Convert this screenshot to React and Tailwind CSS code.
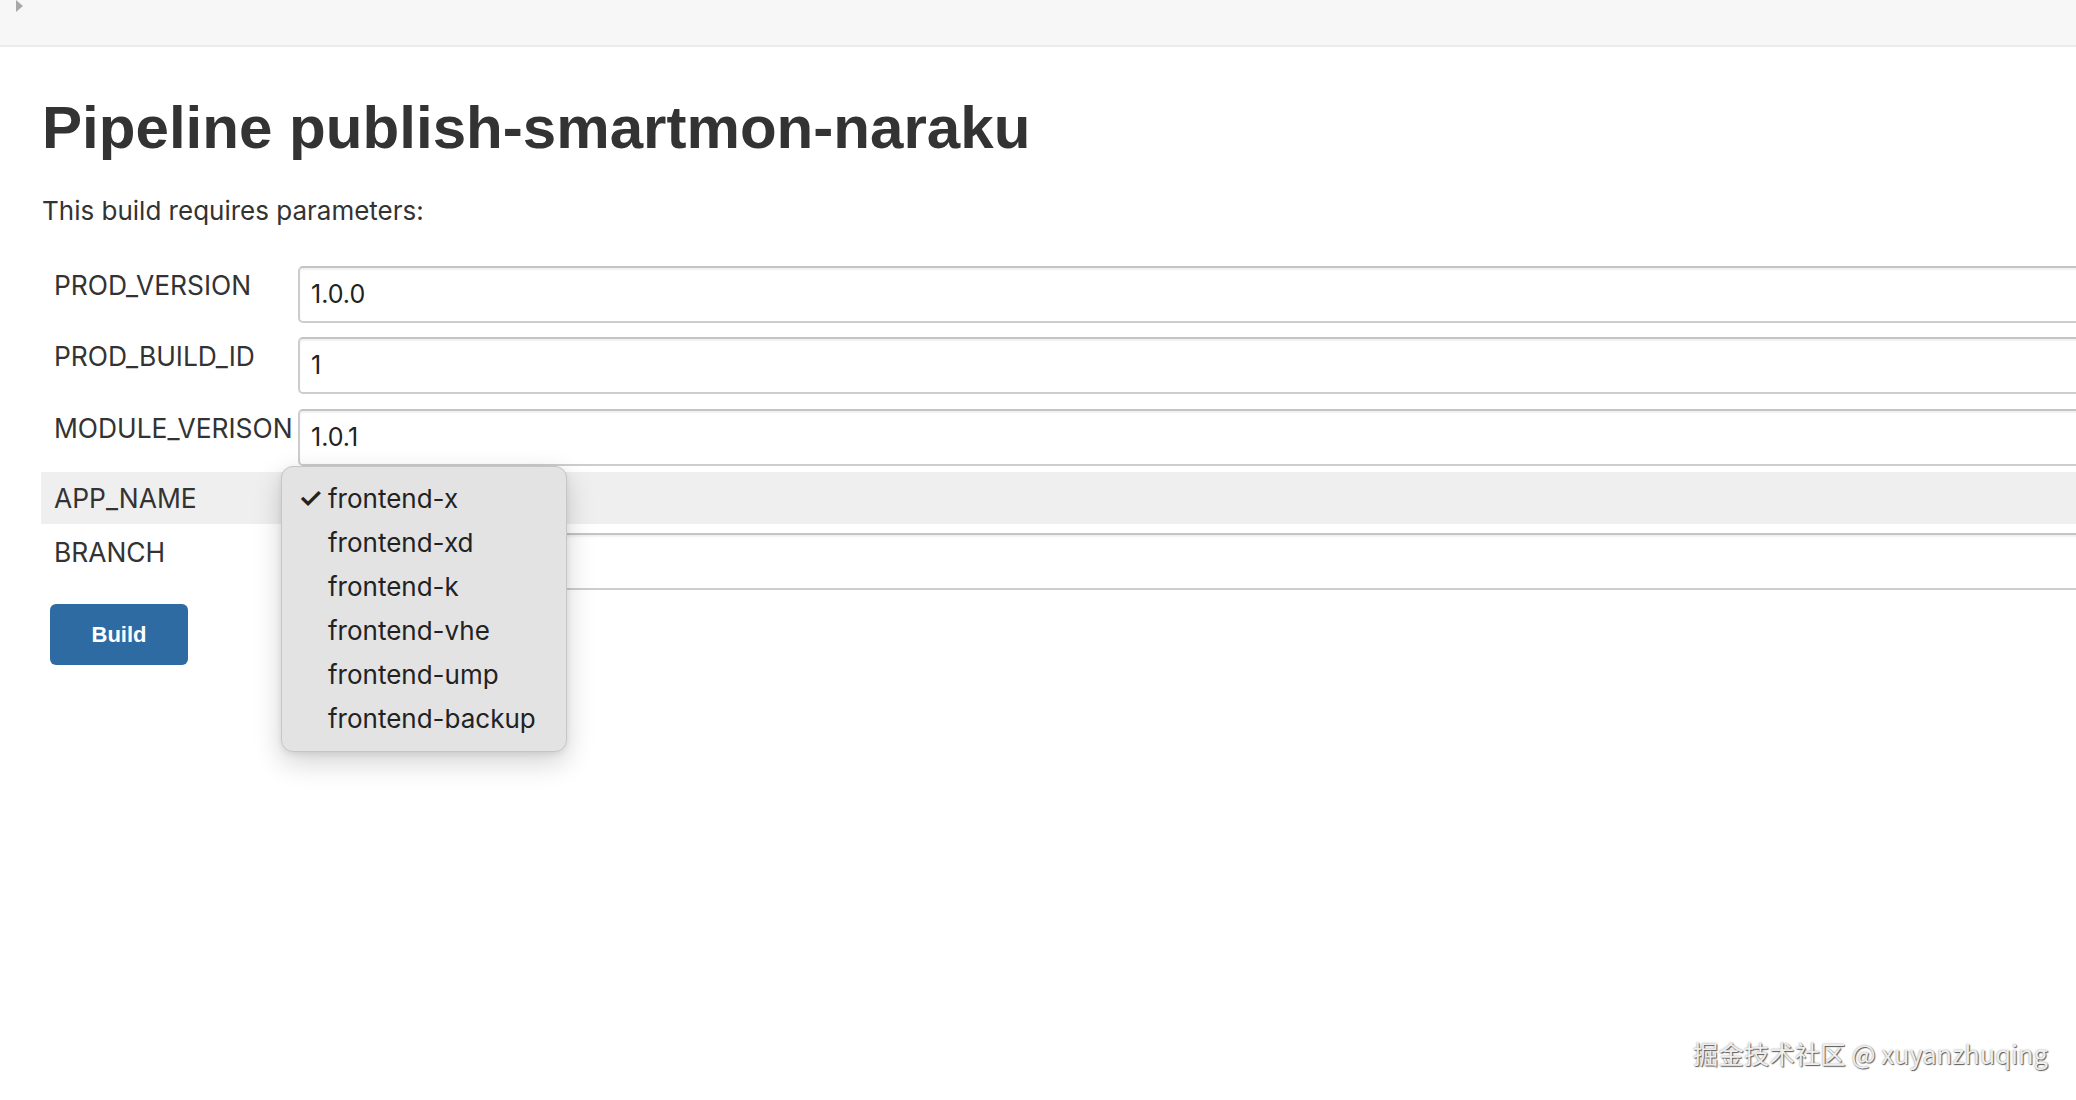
import React from "react";

const sans = { fontFamily: "Inter, 'Noto Sans', sans-serif" };

function TextRow({ label, value }) {
  return (
    <div className="flex">
      <div className="w-[257px] shrink-0 pl-[13px] pt-[4px] text-[26.4px] leading-[31px] text-[#333]">
        {label}
      </div>
      <div className="flex-1 -mr-6 h-[57px] rounded-[5px] border-2 border-[#cdcdcd] border-t-[#c4c4c4] bg-white shadow-[inset_0_2px_2px_rgba(0,0,0,0.06)] flex items-center pl-[11px] text-[25px] text-[#222]">
        {value}
      </div>
    </div>
  );
}

const apps = [
  "frontend-x",
  "frontend-xd",
  "frontend-k",
  "frontend-vhe",
  "frontend-ump",
  "frontend-backup",
];

export default function App() {
  return (
    <div className="relative min-h-[1100px] w-full overflow-hidden bg-white" style={sans}>
      {/* top bar */}
      <div className="h-[47px] bg-[#f7f7f7] border-b-2 border-[#ececec] relative">
        <svg className="absolute left-[15px] top-0" width="9" height="13" viewBox="0 0 9 13">
          <path d="M1 0 L8 6 L1 12 Z" fill="#a8a8a8" />
        </svg>
      </div>

      <div className="pl-[41px]">
        <h1
          className="mt-[51px] ml-[1px] text-[60.1px] leading-[60px] font-bold text-[#333]"
          style={{ fontFamily: "'Liberation Sans', Arial, sans-serif" }}
        >
          Pipeline publish-smartmon-naraku
        </h1>

        <p className="mt-[37px] ml-[1px] text-[26px] leading-[32px] text-[#333]">
          This build requires parameters:
        </p>

        <div className="mt-[39px] flex flex-col">
          <TextRow label="PROD_VERSION" value="1.0.0" />
          <div className="h-[14px]" />
          <TextRow label="PROD_BUILD_ID" value="1" />
          <div className="h-[15px]" />
          <TextRow label="MODULE_VERISON" value="1.0.1" />
          <div className="h-[6px]" />

          {/* choice row with its open menu */}
          <div className="relative h-[52px] bg-[#efefef] flex items-center">
            <div className="pl-[13px] text-[26.4px] leading-[31px] text-[#333]">APP_NAME</div>
            <div className="absolute left-[240px] top-[-6px] w-[286px] rounded-[12px] border border-[#c6c6c6] bg-[#e3e3e3] pt-[9px] pb-[11px] shadow-[0_10px_28px_rgba(0,0,0,0.18),0_2px_6px_rgba(0,0,0,0.08)] z-10">
              {apps.map((a, i) => (
                <div key={a} className="flex h-[44px] items-center text-[26px] text-[#222]">
                  <span className="w-[46px] pl-[16px] text-[28px] leading-none font-semibold">
                    {i === 0 ? "✓" : ""}
                  </span>
                  <span>{a}</span>
                </div>
              ))}
            </div>
          </div>

          <div className="h-[9px]" />
          <TextRow label="BRANCH" value="" />
        </div>

        <button
          className="mt-[14px] ml-[9px] h-[61px] w-[138px] rounded-[6px] bg-[#2f6ba3] text-[22px] font-bold text-white"
          style={{ fontFamily: "'Liberation Sans', Arial, sans-serif" }}
        >
          Build
        </button>
      </div>

      <div
        className="absolute right-[28px] bottom-[28px] text-[25.5px] text-[#eeeeee] [text-shadow:1px_1px_1px_rgba(0,0,0,0.6),0_0_2px_rgba(0,0,0,0.4)]"
        style={{ fontFamily: "'Noto Sans CJK SC', 'Noto Sans', sans-serif" }}
      >
        掘金技术社区 @ xuyanzhuqing
      </div>
    </div>
  );
}
